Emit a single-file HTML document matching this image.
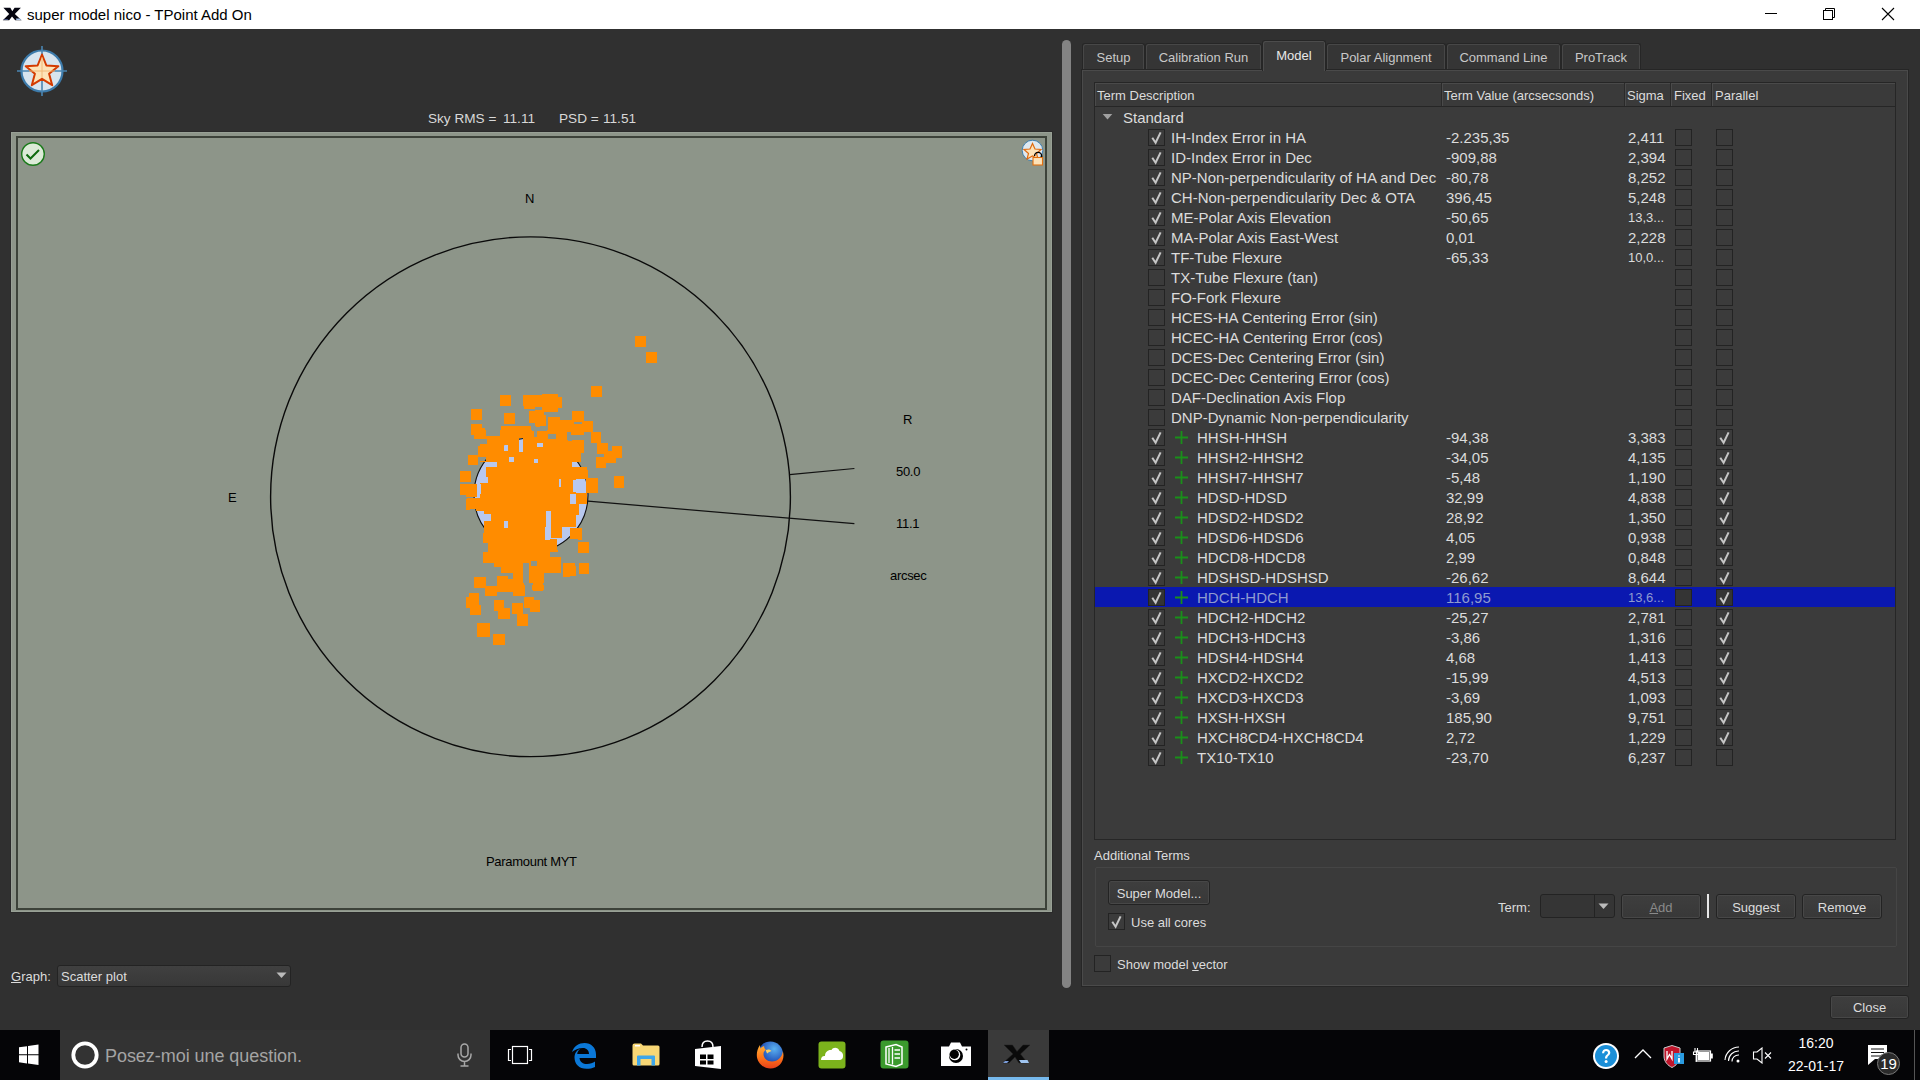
<!DOCTYPE html>
<html><head><meta charset="utf-8">
<style>
*{box-sizing:border-box;margin:0;padding:0}
html,body{width:1920px;height:1080px;overflow:hidden;background:#303030;font-family:"Liberation Sans",sans-serif;position:relative}
.a{position:absolute}
div{position:absolute}
.titlebar{left:0;top:0;width:1920px;height:29px;background:#fff}
.t15{font-size:15px;line-height:20px;color:#dcdcdc;white-space:nowrap}
.t13{font-size:13px;line-height:20px;color:#dcdcdc;white-space:nowrap}
.cb{width:17px;height:17px;border:1px solid #232323;background:#3b3b3b}
.cb svg{position:absolute;left:-1px;top:-1px}
.selbar{left:1095px;width:800px;height:20px;background:#0a18b0}
.tab{top:43px;height:27px;border:1px solid #262626;border-bottom:none;border-radius:3px 3px 0 0;background:#353535;color:#c8c8c8;font-size:13px;line-height:27px;text-align:center;box-shadow:inset 1px 1px 0 #474747,inset -1px 0 0 #474747}
.pl{font-size:13px;line-height:14px;color:#000;white-space:nowrap;letter-spacing:-0.3px}
.btn{border:1px solid #232323;border-radius:3px;background:linear-gradient(#3e3e3e,#383838);box-shadow:inset 0 0 0 1px #474747;color:#dcdcdc;font-size:13px;text-align:center}
</style></head><body>
<div class="titlebar">
  <svg class="a" style="left:0;top:0" width="24" height="24" viewBox="0 0 24 24"><path d="M3.4 7.8H10.3L12.3 11.3L14.6 7.8H20.9L14.8 14L21.6 20.3H15.2L12 16.6L9.2 20.3H2.8L9.2 14Z" fill="#050510"/><path d="M15.8 18.4H20L21.2 20H16.5Z" fill="#a9c4ec"/><path d="M4.6 19.2H8.4L7.6 20H3.8Z" fill="#5a6aa8"/></svg>
  <div style="left:27px;top:5px;font-size:15px;line-height:20px;color:#000">super model nico - TPoint Add On</div>
  <div style="left:1765px;top:13px;width:12px;height:1px;background:#000"></div>
  <svg class="a" style="left:1822px;top:7px" width="14" height="14" viewBox="0 0 14 14"><rect x="1.5" y="3.5" width="9" height="9" fill="none" stroke="#000"/><path d="M3.5 3.5V1.5H12.5V10.5H10.5" fill="none" stroke="#000"/></svg>
  <svg class="a" style="left:1881px;top:7px" width="14" height="14" viewBox="0 0 14 14"><path d="M1 1L13 13M13 1L1 13" stroke="#000" stroke-width="1.1"/></svg>
</div>

<!-- left panel -->
<svg class="a" style="left:16px;top:45px" width="52" height="52" viewBox="0 0 52 52">
  <circle cx="26" cy="26" r="20.5" fill="#d8e4ee" stroke="#3d7bab" stroke-width="2.2"/>
  <path d="M26 1V51M1 26H51" stroke="#4a85b2" stroke-width="1.6"/>
  <path d="M26 9.5 L30.4 20.5 L42.3 21.2 L33.1 28.7 L36.2 40.2 L26 33.8 L15.8 40.2 L18.9 28.7 L9.7 21.2 L21.6 20.5 Z" fill="#fde3b8" stroke="#d43a00" stroke-width="2" stroke-linejoin="round"/>
  <path d="M26 12V33M13 26H39" stroke="#f0b878" stroke-width="1"/>
</svg>
<div style="left:428px;top:110px;font-size:13.6px;line-height:18px;color:#d8d8d8;white-space:pre">Sky RMS =</div>
<div style="left:503px;top:110px;font-size:13.6px;line-height:18px;color:#d8d8d8;white-space:pre">11.11</div>
<div style="left:559px;top:110px;font-size:13.6px;line-height:18px;color:#d8d8d8;white-space:pre">PSD =</div>
<div style="left:603px;top:110px;font-size:13.6px;line-height:18px;color:#d8d8d8;white-space:pre">11.51</div>

<div style="left:10px;top:131px;width:1043px;height:782px;border:1px solid #2a2a2a;background:#8d9589"></div>
<div style="left:11px;top:132px;width:1041px;height:780px;border:1px solid #98a095"></div>
<div style="left:16px;top:136px;width:1031px;height:774px;border:2px solid #3c4239"></div>


<svg class="a" style="left:0;top:0" width="1060" height="1000" viewBox="0 0 1060 1000">
  <circle cx="530.5" cy="496.75" r="259.9" fill="none" stroke="#0a0a0a" stroke-width="1.4"/>
  <circle cx="531" cy="495" r="57" fill="#b8c8ee" stroke="#111" stroke-width="1.1"/>
  <path d="M789.5 474.6 L854.4 468.5" stroke="#111" stroke-width="1.2"/>
  <path d="M588 501.2 L854.4 523.7" stroke="#111" stroke-width="1.2"/>
  <g fill="#ff8c00"><path d="M635 336h11v11h-11zM646 352h11v11h-11zM591 386h11v8h-11zM542 394h16v1h-16zM591 394h11v1h-11zM500 395h11v2h-11zM523 395h35v2h-35zM591 395h11v2h-11zM500 397h11v9h-11zM523 397h39v9h-39zM524 406h38v1h-38zM524 407h11v1h-11zM542 407h20v1h-20zM524 408h11v1h-11zM542 408h16v1h-16zM471 409h11v1h-11zM542 409h16v1h-16zM471 410h11v1h-11zM535 410h23v1h-23zM471 411h11v1h-11zM529 411h29v1h-29zM572 411h12v1h-12zM471 412h11v1h-11zM529 412h15v1h-15zM572 412h12v1h-12zM471 413h11v2h-11zM504 413h11v2h-11zM529 413h15v2h-15zM572 413h12v2h-12zM471 415h11v2h-11zM504 415h11v2h-11zM529 415h17v2h-17zM572 415h12v2h-12zM471 417h11v3h-11zM504 417h11v3h-11zM529 417h17v3h-17zM548 417h12v3h-12zM572 417h12v3h-12zM504 420h11v1h-11zM529 420h17v1h-17zM548 420h36v1h-36zM504 421h11v1h-11zM529 421h17v1h-17zM548 421h45v1h-45zM504 422h11v1h-11zM529 422h17v1h-17zM548 422h26v1h-26zM582 422h11v1h-11zM504 423h11v1h-11zM535 423h11v1h-11zM548 423h26v1h-26zM582 423h11v1h-11zM471 424h11v2h-11zM535 424h11v2h-11zM548 424h45v2h-45zM471 426h11v1h-11zM501 426h30v1h-30zM536 426h4v1h-4zM548 426h45v1h-45zM471 427h11v1h-11zM501 427h30v1h-30zM548 427h45v1h-45zM471 428h14v2h-14zM501 428h30v2h-30zM548 428h45v2h-45zM471 430h15v1h-15zM500 430h32v1h-32zM547 430h46v1h-46zM471 431h15v1h-15zM500 431h34v1h-34zM537 431h56v1h-56zM471 432h15v2h-15zM500 432h34v2h-34zM537 432h30v2h-30zM571 432h13v2h-13zM591 432h10v2h-10zM471 434h15v1h-15zM500 434h34v1h-34zM537 434h11v1h-11zM556 434h11v1h-11zM571 434h13v1h-13zM591 434h10v1h-10zM474 435h12v1h-12zM500 435h34v1h-34zM537 435h11v1h-11zM556 435h11v1h-11zM591 435h10v1h-10zM474 436h60v1h-60zM537 436h11v1h-11zM556 436h11v1h-11zM591 436h10v1h-10zM474 437h74v1h-74zM556 437h11v1h-11zM591 437h10v1h-10zM474 438h45v1h-45zM523 438h25v1h-25zM556 438h11v1h-11zM591 438h10v1h-10zM487 439h32v1h-32zM523 439h44v1h-44zM591 439h10v1h-10zM487 440h32v1h-32zM523 440h45v1h-45zM572 440h12v1h-12zM591 440h10v1h-10zM487 441h32v2h-32zM523 441h61v2h-61zM591 441h10v2h-10zM487 443h32v1h-32zM523 443h14v1h-14zM543 443h41v1h-41zM597 443h11v1h-11zM480 444h39v1h-39zM523 444h14v1h-14zM543 444h41v1h-41zM597 444h11v1h-11zM480 445h24v1h-24zM508 445h11v1h-11zM523 445h14v1h-14zM543 445h41v1h-41zM597 445h11v1h-11zM478 446h26v1h-26zM508 446h11v1h-11zM523 446h14v1h-14zM543 446h41v1h-41zM597 446h11v1h-11zM612 446h10v1h-10zM478 447h26v4h-26zM508 447h11v4h-11zM523 447h61v4h-61zM597 447h11v4h-11zM612 447h10v4h-10zM478 451h41v1h-41zM523 451h61v1h-61zM597 451h25v1h-25zM478 452h106v1h-106zM597 452h25v1h-25zM478 453h103v1h-103zM597 453h25v1h-25zM478 454h103v1h-103zM604 454h18v1h-18zM468 455h113v2h-113zM604 455h18v2h-18zM468 457h10v1h-10zM486 457h23v1h-23zM514 457h67v1h-67zM596 457h26v1h-26zM468 458h10v1h-10zM486 458h23v1h-23zM514 458h67v1h-67zM596 458h20v1h-20zM468 459h10v2h-10zM486 459h23v2h-23zM514 459h20v2h-20zM538 459h43v2h-43zM596 459h20v2h-20zM468 461h10v1h-10zM480 461h29v1h-29zM514 461h20v1h-20zM538 461h43v1h-43zM596 461h20v1h-20zM468 462h10v1h-10zM497 462h37v1h-37zM538 462h34v1h-34zM596 462h20v1h-20zM468 463h10v2h-10zM497 463h75v2h-75zM596 463h10v2h-10zM497 465h75v2h-75zM596 465h10v2h-10zM486 467h101v1h-101zM596 467h10v1h-10zM486 468h101v2h-101zM486 470h102v1h-102zM460 471h11v5h-11zM486 471h102v5h-102zM460 476h11v1h-11zM486 476h102v1h-102zM614 476h10v1h-10zM460 477h11v1h-11zM488 477h100v1h-100zM614 477h10v1h-10zM460 478h11v1h-11zM488 478h110v1h-110zM614 478h10v1h-10zM460 479h11v1h-11zM488 479h71v1h-71zM561 479h15v1h-15zM586 479h12v1h-12zM614 479h10v1h-10zM460 480h11v2h-11zM488 480h71v2h-71zM561 480h12v2h-12zM586 480h12v2h-12zM614 480h10v2h-10zM488 482h71v1h-71zM561 482h12v1h-12zM586 482h12v1h-12zM614 482h10v1h-10zM480 483h79v1h-79zM561 483h12v1h-12zM586 483h12v1h-12zM614 483h10v1h-10zM460 484h17v3h-17zM481 484h78v3h-78zM561 484h12v3h-12zM586 484h12v3h-12zM614 484h10v3h-10zM460 487h17v1h-17zM481 487h92v1h-92zM586 487h12v1h-12zM614 487h10v1h-10zM460 488h17v4h-17zM481 488h92v4h-92zM586 488h12v4h-12zM460 492h17v1h-17zM481 492h95v1h-95zM586 492h12v1h-12zM460 493h17v1h-17zM481 493h106v1h-106zM460 494h17v1h-17zM480 494h90v1h-90zM576 494h11v1h-11zM466 495h11v2h-11zM480 495h90v2h-90zM576 495h11v2h-11zM480 497h90v1h-90zM576 497h11v1h-11zM467 498h103v1h-103zM576 498h11v1h-11zM466 499h104v5h-104zM576 499h11v5h-11zM466 504h113v5h-113zM466 509h4v1h-4zM476 509h103v1h-103zM476 510h103v1h-103zM484 511h62v3h-62zM551 511h28v3h-28zM491 514h55v1h-55zM551 514h28v1h-28zM491 515h55v6h-55zM551 515h25v6h-25zM484 521h20v6h-20zM508 521h38v6h-38zM551 521h25v6h-25zM484 527h20v1h-20zM508 527h37v1h-37zM551 527h11v1h-11zM484 528h61v5h-61zM551 528h11v5h-11zM570 528h12v5h-12zM483 533h62v5h-62zM551 533h11v5h-11zM570 533h12v5h-12zM483 538h62v1h-62zM570 538h12v1h-12zM483 539h62v1h-62zM550 539h7v1h-7zM578 539h4v1h-4zM483 540h74v2h-74zM483 542h74v1h-74zM578 542h11v1h-11zM488 543h69v7h-69zM578 543h11v7h-11zM488 550h70v2h-70zM578 550h11v2h-11zM483 552h67v1h-67zM578 552h11v1h-11zM483 553h67v4h-67zM483 557h78v4h-78zM483 561h48v2h-48zM537 561h24v2h-24zM494 563h29v3h-29zM529 563h2v3h-2zM537 563h24v3h-24zM563 563h12v3h-12zM579 563h10v3h-10zM494 566h29v1h-29zM529 566h32v1h-32zM563 566h13v1h-13zM579 566h10v1h-10zM501 567h22v6h-22zM529 567h32v6h-32zM563 567h13v6h-13zM579 567h10v6h-10zM513 573h10v1h-10zM529 573h15v1h-15zM563 573h13v1h-13zM579 573h10v1h-10zM513 574h10v2h-10zM529 574h15v2h-15zM563 574h13v2h-13zM497 576h11v1h-11zM513 576h10v1h-10zM529 576h15v1h-15zM563 576h7v1h-7zM474 577h12v2h-12zM497 577h11v2h-11zM513 577h10v2h-10zM529 577h15v2h-15zM474 579h12v4h-12zM497 579h26v4h-26zM529 579h15v4h-15zM474 583h12v2h-12zM497 583h27v2h-27zM533 583h10v2h-10zM474 585h12v1h-12zM497 585h28v1h-28zM532 585h12v1h-12zM474 586h51v2h-51zM532 586h12v2h-12zM485 588h40v2h-40zM532 588h12v2h-12zM485 590h40v1h-40zM533 590h10v1h-10zM485 591h40v1h-40zM485 592h12v1h-12zM513 592h12v1h-12zM469 593h10v3h-10zM485 593h12v3h-12zM513 593h12v3h-12zM469 596h10v1h-10zM466 597h13v3h-13zM524 597h10v3h-10zM466 600h13v3h-13zM494 600h10v3h-10zM524 600h16v3h-16zM466 603h13v2h-13zM494 603h10v2h-10zM512 603h11v2h-11zM524 603h16v2h-16zM466 605h15v3h-15zM494 605h10v3h-10zM512 605h11v3h-11zM524 605h16v3h-16zM470 608h11v3h-11zM494 608h16v3h-16zM512 608h11v3h-11zM530 608h10v3h-10zM470 611h11v1h-11zM498 611h12v1h-12zM512 611h11v1h-11zM530 611h10v1h-10zM470 612h11v2h-11zM498 612h12v2h-12zM512 612h11v2h-11zM470 614h11v1h-11zM498 614h12v1h-12zM517 614h11v1h-11zM498 615h12v4h-12zM517 615h11v4h-11zM517 619h11v4h-11zM477 623h13v3h-13zM517 623h11v3h-11zM477 626h13v8h-13zM477 634h13v3h-13zM493 634h12v3h-12zM493 637h12v8h-12z"/></g>
  <g fill="#b8c8ee"></g>
  <g fill="#ff8c00"></g>
</svg>
<div class="pl" style="left:525px;top:192px">N</div>
<div class="pl" style="left:228px;top:491px">E</div>
<div class="pl" style="left:903px;top:413px">R</div>
<div class="pl" style="left:896px;top:465px">50.0</div>
<div class="pl" style="left:896px;top:517px">11.1</div>
<div class="pl" style="left:890px;top:569px">arcsec</div>
<div class="pl" style="left:486px;top:855px">Paramount MYT</div>
<svg class="a" style="left:20px;top:141px" width="26" height="26" viewBox="0 0 26 26">
  <circle cx="13" cy="13" r="11.3" fill="#dcebd8" stroke="#1a7a1a" stroke-width="1.4"/>
  <path d="M6.5 13.5 L10.5 17.5 L19 9" fill="none" stroke="#0d6a0d" stroke-width="2"/>
</svg>
<svg class="a" style="left:1019px;top:139px" width="28" height="28" viewBox="0 0 28 28">
  <circle cx="13.5" cy="11.5" r="10.3" fill="#dfe8f0" stroke="#3f7fb0" stroke-width="1"/>
  <path d="M13.5 4.5 L16 10 L22 10.5 L17.5 14.5 L19 20 L13.5 17 L8 20 L9.5 14.5 L5 10.5 L11 10 Z" fill="#fde2b8" stroke="#e06a10" stroke-width="1.2"/>
  <path d="M15.5 17 A3.6 3.6 0 0 1 22.7 17 V19" fill="none" stroke="#000" stroke-width="1.4"/>
  <rect x="14" y="18.5" width="9.5" height="7.5" fill="#fde2b8" stroke="#e07010" stroke-width="1.1"/>
</svg>

<!-- right splitter -->
<div style="left:1062px;top:40px;width:9px;height:948px;border-radius:5px;background:#838383"></div>

<!-- tabs -->
<div class="tab" style="left:1082px;width:63px">Setup</div>
<div class="tab" style="left:1145px;width:117px">Calibration Run</div>
<div class="tab" style="left:1326px;width:120px">Polar Alignment</div>
<div class="tab" style="left:1446px;width:115px">Command Line</div>
<div class="tab" style="left:1561px;width:80px">ProTrack</div>
<div style="left:1081px;top:69px;width:828px;height:918px;border:1px solid #262626;background:#3a3a3a;box-shadow:inset 0 0 0 1px #4a4a4a"></div>
<div class="tab" style="left:1262px;top:40px;width:64px;height:31px;background:#3a3a3a;color:#e8e8e8;line-height:29px;border-bottom:none;z-index:2;box-shadow:inset 1px 1px 0 #4c4c4c,inset -1px 0 0 #4c4c4c">Model</div>

<!-- table -->
<div style="left:1094px;top:82px;width:802px;height:758px;border:1px solid #262626;background:#3b3b3b"></div>
<div style="left:1095px;top:83px;width:800px;height:24px;border-bottom:1px solid #262626;background:#3a3a3a;box-shadow:inset 1px 1px 0 #4a4a4a"></div>
<div style="left:1441px;top:83px;width:1px;height:23px;background:#2a2a2a;box-shadow:1px 0 0 #4a4a4a"></div>
<div style="left:1624px;top:83px;width:1px;height:23px;background:#2a2a2a;box-shadow:1px 0 0 #4a4a4a"></div>
<div style="left:1670px;top:83px;width:1px;height:23px;background:#2a2a2a;box-shadow:1px 0 0 #4a4a4a"></div>
<div style="left:1711px;top:83px;width:1px;height:23px;background:#2a2a2a;box-shadow:1px 0 0 #4a4a4a"></div>
<div class="t13" style="left:1097px;top:86px">Term Description</div>
<div class="t13" style="left:1444px;top:86px">Term Value (arcsecsonds)</div>
<div class="t13" style="left:1627px;top:86px">Sigma</div>
<div class="t13" style="left:1674px;top:86px">Fixed</div>
<div class="t13" style="left:1715px;top:86px">Parallel</div>
<svg class="a" style="left:1102px;top:114px" width="11" height="6" viewBox="0 0 11 6"><path d="M0.7 0H10.3L5.5 5.5Z" fill="#a0a0a0"/></svg>
<div class="t15" style="left:1123px;top:108px">Standard</div>
<div class="cb" style="left:1148px;top:129px;"><svg width="17" height="17" viewBox="0 0 17 17"><path d="M4.3 8.8 L7.6 13.8 L12.6 3.4" fill="none" stroke="#c6c6c6" stroke-width="2" stroke-linejoin="miter"/></svg></div>
<div class="t15" style="left:1171px;top:128px;">IH-Index Error in HA</div>
<div class="t15" style="left:1446px;top:128px;">-2.235,35</div>
<div class="t15" style="left:1628px;top:128px">2,411</div>
<div class="cb" style="left:1675px;top:129px;"></div>
<div class="cb" style="left:1716px;top:129px;"></div>
<div class="cb" style="left:1148px;top:149px;"><svg width="17" height="17" viewBox="0 0 17 17"><path d="M4.3 8.8 L7.6 13.8 L12.6 3.4" fill="none" stroke="#c6c6c6" stroke-width="2" stroke-linejoin="miter"/></svg></div>
<div class="t15" style="left:1171px;top:148px;">ID-Index Error in Dec</div>
<div class="t15" style="left:1446px;top:148px;">-909,88</div>
<div class="t15" style="left:1628px;top:148px">2,394</div>
<div class="cb" style="left:1675px;top:149px;"></div>
<div class="cb" style="left:1716px;top:149px;"></div>
<div class="cb" style="left:1148px;top:169px;"><svg width="17" height="17" viewBox="0 0 17 17"><path d="M4.3 8.8 L7.6 13.8 L12.6 3.4" fill="none" stroke="#c6c6c6" stroke-width="2" stroke-linejoin="miter"/></svg></div>
<div class="t15" style="left:1171px;top:168px;">NP-Non-perpendicularity of HA and Dec</div>
<div class="t15" style="left:1446px;top:168px;">-80,78</div>
<div class="t15" style="left:1628px;top:168px">8,252</div>
<div class="cb" style="left:1675px;top:169px;"></div>
<div class="cb" style="left:1716px;top:169px;"></div>
<div class="cb" style="left:1148px;top:189px;"><svg width="17" height="17" viewBox="0 0 17 17"><path d="M4.3 8.8 L7.6 13.8 L12.6 3.4" fill="none" stroke="#c6c6c6" stroke-width="2" stroke-linejoin="miter"/></svg></div>
<div class="t15" style="left:1171px;top:188px;">CH-Non-perpendicularity Dec &amp; OTA</div>
<div class="t15" style="left:1446px;top:188px;">396,45</div>
<div class="t15" style="left:1628px;top:188px">5,248</div>
<div class="cb" style="left:1675px;top:189px;"></div>
<div class="cb" style="left:1716px;top:189px;"></div>
<div class="cb" style="left:1148px;top:209px;"><svg width="17" height="17" viewBox="0 0 17 17"><path d="M4.3 8.8 L7.6 13.8 L12.6 3.4" fill="none" stroke="#c6c6c6" stroke-width="2" stroke-linejoin="miter"/></svg></div>
<div class="t15" style="left:1171px;top:208px;">ME-Polar Axis Elevation</div>
<div class="t15" style="left:1446px;top:208px;">-50,65</div>
<div class="t13" style="left:1628px;top:208px;">13,3...</div>
<div class="cb" style="left:1675px;top:209px;"></div>
<div class="cb" style="left:1716px;top:209px;"></div>
<div class="cb" style="left:1148px;top:229px;"><svg width="17" height="17" viewBox="0 0 17 17"><path d="M4.3 8.8 L7.6 13.8 L12.6 3.4" fill="none" stroke="#c6c6c6" stroke-width="2" stroke-linejoin="miter"/></svg></div>
<div class="t15" style="left:1171px;top:228px;">MA-Polar Axis East-West</div>
<div class="t15" style="left:1446px;top:228px;">0,01</div>
<div class="t15" style="left:1628px;top:228px">2,228</div>
<div class="cb" style="left:1675px;top:229px;"></div>
<div class="cb" style="left:1716px;top:229px;"></div>
<div class="cb" style="left:1148px;top:249px;"><svg width="17" height="17" viewBox="0 0 17 17"><path d="M4.3 8.8 L7.6 13.8 L12.6 3.4" fill="none" stroke="#c6c6c6" stroke-width="2" stroke-linejoin="miter"/></svg></div>
<div class="t15" style="left:1171px;top:248px;">TF-Tube Flexure</div>
<div class="t15" style="left:1446px;top:248px;">-65,33</div>
<div class="t13" style="left:1628px;top:248px;">10,0...</div>
<div class="cb" style="left:1675px;top:249px;"></div>
<div class="cb" style="left:1716px;top:249px;"></div>
<div class="cb" style="left:1148px;top:269px;"></div>
<div class="t15" style="left:1171px;top:268px;">TX-Tube Flexure (tan)</div>
<div class="cb" style="left:1675px;top:269px;"></div>
<div class="cb" style="left:1716px;top:269px;"></div>
<div class="cb" style="left:1148px;top:289px;"></div>
<div class="t15" style="left:1171px;top:288px;">FO-Fork Flexure</div>
<div class="cb" style="left:1675px;top:289px;"></div>
<div class="cb" style="left:1716px;top:289px;"></div>
<div class="cb" style="left:1148px;top:309px;"></div>
<div class="t15" style="left:1171px;top:308px;">HCES-HA Centering Error (sin)</div>
<div class="cb" style="left:1675px;top:309px;"></div>
<div class="cb" style="left:1716px;top:309px;"></div>
<div class="cb" style="left:1148px;top:329px;"></div>
<div class="t15" style="left:1171px;top:328px;">HCEC-HA Centering Error (cos)</div>
<div class="cb" style="left:1675px;top:329px;"></div>
<div class="cb" style="left:1716px;top:329px;"></div>
<div class="cb" style="left:1148px;top:349px;"></div>
<div class="t15" style="left:1171px;top:348px;">DCES-Dec Centering Error (sin)</div>
<div class="cb" style="left:1675px;top:349px;"></div>
<div class="cb" style="left:1716px;top:349px;"></div>
<div class="cb" style="left:1148px;top:369px;"></div>
<div class="t15" style="left:1171px;top:368px;">DCEC-Dec Centering Error (cos)</div>
<div class="cb" style="left:1675px;top:369px;"></div>
<div class="cb" style="left:1716px;top:369px;"></div>
<div class="cb" style="left:1148px;top:389px;"></div>
<div class="t15" style="left:1171px;top:388px;">DAF-Declination Axis Flop</div>
<div class="cb" style="left:1675px;top:389px;"></div>
<div class="cb" style="left:1716px;top:389px;"></div>
<div class="cb" style="left:1148px;top:409px;"></div>
<div class="t15" style="left:1171px;top:408px;">DNP-Dynamic Non-perpendicularity</div>
<div class="cb" style="left:1675px;top:409px;"></div>
<div class="cb" style="left:1716px;top:409px;"></div>
<div class="cb" style="left:1148px;top:429px;"><svg width="17" height="17" viewBox="0 0 17 17"><path d="M4.3 8.8 L7.6 13.8 L12.6 3.4" fill="none" stroke="#c6c6c6" stroke-width="2" stroke-linejoin="miter"/></svg></div>
<div class="plus" style="left:1174px;top:430px"><svg width="15" height="15" viewBox="0 0 15 15"><path d="M7.5 1V14M1 7.5H14" stroke="#1a8f1a" stroke-width="1.8"/></svg></div>
<div class="t15" style="left:1197px;top:428px;">HHSH-HHSH</div>
<div class="t15" style="left:1446px;top:428px;">-94,38</div>
<div class="t15" style="left:1628px;top:428px">3,383</div>
<div class="cb" style="left:1675px;top:429px;"></div>
<div class="cb" style="left:1716px;top:429px;"><svg width="17" height="17" viewBox="0 0 17 17"><path d="M4.3 8.8 L7.6 13.8 L12.6 3.4" fill="none" stroke="#c6c6c6" stroke-width="2" stroke-linejoin="miter"/></svg></div>
<div class="cb" style="left:1148px;top:449px;"><svg width="17" height="17" viewBox="0 0 17 17"><path d="M4.3 8.8 L7.6 13.8 L12.6 3.4" fill="none" stroke="#c6c6c6" stroke-width="2" stroke-linejoin="miter"/></svg></div>
<div class="plus" style="left:1174px;top:450px"><svg width="15" height="15" viewBox="0 0 15 15"><path d="M7.5 1V14M1 7.5H14" stroke="#1a8f1a" stroke-width="1.8"/></svg></div>
<div class="t15" style="left:1197px;top:448px;">HHSH2-HHSH2</div>
<div class="t15" style="left:1446px;top:448px;">-34,05</div>
<div class="t15" style="left:1628px;top:448px">4,135</div>
<div class="cb" style="left:1675px;top:449px;"></div>
<div class="cb" style="left:1716px;top:449px;"><svg width="17" height="17" viewBox="0 0 17 17"><path d="M4.3 8.8 L7.6 13.8 L12.6 3.4" fill="none" stroke="#c6c6c6" stroke-width="2" stroke-linejoin="miter"/></svg></div>
<div class="cb" style="left:1148px;top:469px;"><svg width="17" height="17" viewBox="0 0 17 17"><path d="M4.3 8.8 L7.6 13.8 L12.6 3.4" fill="none" stroke="#c6c6c6" stroke-width="2" stroke-linejoin="miter"/></svg></div>
<div class="plus" style="left:1174px;top:470px"><svg width="15" height="15" viewBox="0 0 15 15"><path d="M7.5 1V14M1 7.5H14" stroke="#1a8f1a" stroke-width="1.8"/></svg></div>
<div class="t15" style="left:1197px;top:468px;">HHSH7-HHSH7</div>
<div class="t15" style="left:1446px;top:468px;">-5,48</div>
<div class="t15" style="left:1628px;top:468px">1,190</div>
<div class="cb" style="left:1675px;top:469px;"></div>
<div class="cb" style="left:1716px;top:469px;"><svg width="17" height="17" viewBox="0 0 17 17"><path d="M4.3 8.8 L7.6 13.8 L12.6 3.4" fill="none" stroke="#c6c6c6" stroke-width="2" stroke-linejoin="miter"/></svg></div>
<div class="cb" style="left:1148px;top:489px;"><svg width="17" height="17" viewBox="0 0 17 17"><path d="M4.3 8.8 L7.6 13.8 L12.6 3.4" fill="none" stroke="#c6c6c6" stroke-width="2" stroke-linejoin="miter"/></svg></div>
<div class="plus" style="left:1174px;top:490px"><svg width="15" height="15" viewBox="0 0 15 15"><path d="M7.5 1V14M1 7.5H14" stroke="#1a8f1a" stroke-width="1.8"/></svg></div>
<div class="t15" style="left:1197px;top:488px;">HDSD-HDSD</div>
<div class="t15" style="left:1446px;top:488px;">32,99</div>
<div class="t15" style="left:1628px;top:488px">4,838</div>
<div class="cb" style="left:1675px;top:489px;"></div>
<div class="cb" style="left:1716px;top:489px;"><svg width="17" height="17" viewBox="0 0 17 17"><path d="M4.3 8.8 L7.6 13.8 L12.6 3.4" fill="none" stroke="#c6c6c6" stroke-width="2" stroke-linejoin="miter"/></svg></div>
<div class="cb" style="left:1148px;top:509px;"><svg width="17" height="17" viewBox="0 0 17 17"><path d="M4.3 8.8 L7.6 13.8 L12.6 3.4" fill="none" stroke="#c6c6c6" stroke-width="2" stroke-linejoin="miter"/></svg></div>
<div class="plus" style="left:1174px;top:510px"><svg width="15" height="15" viewBox="0 0 15 15"><path d="M7.5 1V14M1 7.5H14" stroke="#1a8f1a" stroke-width="1.8"/></svg></div>
<div class="t15" style="left:1197px;top:508px;">HDSD2-HDSD2</div>
<div class="t15" style="left:1446px;top:508px;">28,92</div>
<div class="t15" style="left:1628px;top:508px">1,350</div>
<div class="cb" style="left:1675px;top:509px;"></div>
<div class="cb" style="left:1716px;top:509px;"><svg width="17" height="17" viewBox="0 0 17 17"><path d="M4.3 8.8 L7.6 13.8 L12.6 3.4" fill="none" stroke="#c6c6c6" stroke-width="2" stroke-linejoin="miter"/></svg></div>
<div class="cb" style="left:1148px;top:529px;"><svg width="17" height="17" viewBox="0 0 17 17"><path d="M4.3 8.8 L7.6 13.8 L12.6 3.4" fill="none" stroke="#c6c6c6" stroke-width="2" stroke-linejoin="miter"/></svg></div>
<div class="plus" style="left:1174px;top:530px"><svg width="15" height="15" viewBox="0 0 15 15"><path d="M7.5 1V14M1 7.5H14" stroke="#1a8f1a" stroke-width="1.8"/></svg></div>
<div class="t15" style="left:1197px;top:528px;">HDSD6-HDSD6</div>
<div class="t15" style="left:1446px;top:528px;">4,05</div>
<div class="t15" style="left:1628px;top:528px">0,938</div>
<div class="cb" style="left:1675px;top:529px;"></div>
<div class="cb" style="left:1716px;top:529px;"><svg width="17" height="17" viewBox="0 0 17 17"><path d="M4.3 8.8 L7.6 13.8 L12.6 3.4" fill="none" stroke="#c6c6c6" stroke-width="2" stroke-linejoin="miter"/></svg></div>
<div class="cb" style="left:1148px;top:549px;"><svg width="17" height="17" viewBox="0 0 17 17"><path d="M4.3 8.8 L7.6 13.8 L12.6 3.4" fill="none" stroke="#c6c6c6" stroke-width="2" stroke-linejoin="miter"/></svg></div>
<div class="plus" style="left:1174px;top:550px"><svg width="15" height="15" viewBox="0 0 15 15"><path d="M7.5 1V14M1 7.5H14" stroke="#1a8f1a" stroke-width="1.8"/></svg></div>
<div class="t15" style="left:1197px;top:548px;">HDCD8-HDCD8</div>
<div class="t15" style="left:1446px;top:548px;">2,99</div>
<div class="t15" style="left:1628px;top:548px">0,848</div>
<div class="cb" style="left:1675px;top:549px;"></div>
<div class="cb" style="left:1716px;top:549px;"><svg width="17" height="17" viewBox="0 0 17 17"><path d="M4.3 8.8 L7.6 13.8 L12.6 3.4" fill="none" stroke="#c6c6c6" stroke-width="2" stroke-linejoin="miter"/></svg></div>
<div class="cb" style="left:1148px;top:569px;"><svg width="17" height="17" viewBox="0 0 17 17"><path d="M4.3 8.8 L7.6 13.8 L12.6 3.4" fill="none" stroke="#c6c6c6" stroke-width="2" stroke-linejoin="miter"/></svg></div>
<div class="plus" style="left:1174px;top:570px"><svg width="15" height="15" viewBox="0 0 15 15"><path d="M7.5 1V14M1 7.5H14" stroke="#1a8f1a" stroke-width="1.8"/></svg></div>
<div class="t15" style="left:1197px;top:568px;">HDSHSD-HDSHSD</div>
<div class="t15" style="left:1446px;top:568px;">-26,62</div>
<div class="t15" style="left:1628px;top:568px">8,644</div>
<div class="cb" style="left:1675px;top:569px;"></div>
<div class="cb" style="left:1716px;top:569px;"><svg width="17" height="17" viewBox="0 0 17 17"><path d="M4.3 8.8 L7.6 13.8 L12.6 3.4" fill="none" stroke="#c6c6c6" stroke-width="2" stroke-linejoin="miter"/></svg></div>
<div class="selbar" style="top:587px"></div>
<div class="cb" style="left:1148px;top:589px;background:#343434;"><svg width="17" height="17" viewBox="0 0 17 17"><path d="M4.3 8.8 L7.6 13.8 L12.6 3.4" fill="none" stroke="#c6c6c6" stroke-width="2" stroke-linejoin="miter"/></svg></div>
<div class="plus" style="left:1174px;top:590px"><svg width="15" height="15" viewBox="0 0 15 15"><path d="M7.5 1V14M1 7.5H14" stroke="#1a8f1a" stroke-width="1.8"/></svg></div>
<div class="t15" style="left:1197px;top:588px;color:#8f9bd0;">HDCH-HDCH</div>
<div class="t15" style="left:1446px;top:588px;color:#8f9bd0;">116,95</div>
<div class="t13" style="left:1628px;top:588px;color:#8f9bd0;">13,6...</div>
<div class="cb" style="left:1675px;top:589px;background:#343434;"></div>
<div class="cb" style="left:1716px;top:589px;background:#343434;"><svg width="17" height="17" viewBox="0 0 17 17"><path d="M4.3 8.8 L7.6 13.8 L12.6 3.4" fill="none" stroke="#c6c6c6" stroke-width="2" stroke-linejoin="miter"/></svg></div>
<div class="cb" style="left:1148px;top:609px;"><svg width="17" height="17" viewBox="0 0 17 17"><path d="M4.3 8.8 L7.6 13.8 L12.6 3.4" fill="none" stroke="#c6c6c6" stroke-width="2" stroke-linejoin="miter"/></svg></div>
<div class="plus" style="left:1174px;top:610px"><svg width="15" height="15" viewBox="0 0 15 15"><path d="M7.5 1V14M1 7.5H14" stroke="#1a8f1a" stroke-width="1.8"/></svg></div>
<div class="t15" style="left:1197px;top:608px;">HDCH2-HDCH2</div>
<div class="t15" style="left:1446px;top:608px;">-25,27</div>
<div class="t15" style="left:1628px;top:608px">2,781</div>
<div class="cb" style="left:1675px;top:609px;"></div>
<div class="cb" style="left:1716px;top:609px;"><svg width="17" height="17" viewBox="0 0 17 17"><path d="M4.3 8.8 L7.6 13.8 L12.6 3.4" fill="none" stroke="#c6c6c6" stroke-width="2" stroke-linejoin="miter"/></svg></div>
<div class="cb" style="left:1148px;top:629px;"><svg width="17" height="17" viewBox="0 0 17 17"><path d="M4.3 8.8 L7.6 13.8 L12.6 3.4" fill="none" stroke="#c6c6c6" stroke-width="2" stroke-linejoin="miter"/></svg></div>
<div class="plus" style="left:1174px;top:630px"><svg width="15" height="15" viewBox="0 0 15 15"><path d="M7.5 1V14M1 7.5H14" stroke="#1a8f1a" stroke-width="1.8"/></svg></div>
<div class="t15" style="left:1197px;top:628px;">HDCH3-HDCH3</div>
<div class="t15" style="left:1446px;top:628px;">-3,86</div>
<div class="t15" style="left:1628px;top:628px">1,316</div>
<div class="cb" style="left:1675px;top:629px;"></div>
<div class="cb" style="left:1716px;top:629px;"><svg width="17" height="17" viewBox="0 0 17 17"><path d="M4.3 8.8 L7.6 13.8 L12.6 3.4" fill="none" stroke="#c6c6c6" stroke-width="2" stroke-linejoin="miter"/></svg></div>
<div class="cb" style="left:1148px;top:649px;"><svg width="17" height="17" viewBox="0 0 17 17"><path d="M4.3 8.8 L7.6 13.8 L12.6 3.4" fill="none" stroke="#c6c6c6" stroke-width="2" stroke-linejoin="miter"/></svg></div>
<div class="plus" style="left:1174px;top:650px"><svg width="15" height="15" viewBox="0 0 15 15"><path d="M7.5 1V14M1 7.5H14" stroke="#1a8f1a" stroke-width="1.8"/></svg></div>
<div class="t15" style="left:1197px;top:648px;">HDSH4-HDSH4</div>
<div class="t15" style="left:1446px;top:648px;">4,68</div>
<div class="t15" style="left:1628px;top:648px">1,413</div>
<div class="cb" style="left:1675px;top:649px;"></div>
<div class="cb" style="left:1716px;top:649px;"><svg width="17" height="17" viewBox="0 0 17 17"><path d="M4.3 8.8 L7.6 13.8 L12.6 3.4" fill="none" stroke="#c6c6c6" stroke-width="2" stroke-linejoin="miter"/></svg></div>
<div class="cb" style="left:1148px;top:669px;"><svg width="17" height="17" viewBox="0 0 17 17"><path d="M4.3 8.8 L7.6 13.8 L12.6 3.4" fill="none" stroke="#c6c6c6" stroke-width="2" stroke-linejoin="miter"/></svg></div>
<div class="plus" style="left:1174px;top:670px"><svg width="15" height="15" viewBox="0 0 15 15"><path d="M7.5 1V14M1 7.5H14" stroke="#1a8f1a" stroke-width="1.8"/></svg></div>
<div class="t15" style="left:1197px;top:668px;">HXCD2-HXCD2</div>
<div class="t15" style="left:1446px;top:668px;">-15,99</div>
<div class="t15" style="left:1628px;top:668px">4,513</div>
<div class="cb" style="left:1675px;top:669px;"></div>
<div class="cb" style="left:1716px;top:669px;"><svg width="17" height="17" viewBox="0 0 17 17"><path d="M4.3 8.8 L7.6 13.8 L12.6 3.4" fill="none" stroke="#c6c6c6" stroke-width="2" stroke-linejoin="miter"/></svg></div>
<div class="cb" style="left:1148px;top:689px;"><svg width="17" height="17" viewBox="0 0 17 17"><path d="M4.3 8.8 L7.6 13.8 L12.6 3.4" fill="none" stroke="#c6c6c6" stroke-width="2" stroke-linejoin="miter"/></svg></div>
<div class="plus" style="left:1174px;top:690px"><svg width="15" height="15" viewBox="0 0 15 15"><path d="M7.5 1V14M1 7.5H14" stroke="#1a8f1a" stroke-width="1.8"/></svg></div>
<div class="t15" style="left:1197px;top:688px;">HXCD3-HXCD3</div>
<div class="t15" style="left:1446px;top:688px;">-3,69</div>
<div class="t15" style="left:1628px;top:688px">1,093</div>
<div class="cb" style="left:1675px;top:689px;"></div>
<div class="cb" style="left:1716px;top:689px;"><svg width="17" height="17" viewBox="0 0 17 17"><path d="M4.3 8.8 L7.6 13.8 L12.6 3.4" fill="none" stroke="#c6c6c6" stroke-width="2" stroke-linejoin="miter"/></svg></div>
<div class="cb" style="left:1148px;top:709px;"><svg width="17" height="17" viewBox="0 0 17 17"><path d="M4.3 8.8 L7.6 13.8 L12.6 3.4" fill="none" stroke="#c6c6c6" stroke-width="2" stroke-linejoin="miter"/></svg></div>
<div class="plus" style="left:1174px;top:710px"><svg width="15" height="15" viewBox="0 0 15 15"><path d="M7.5 1V14M1 7.5H14" stroke="#1a8f1a" stroke-width="1.8"/></svg></div>
<div class="t15" style="left:1197px;top:708px;">HXSH-HXSH</div>
<div class="t15" style="left:1446px;top:708px;">185,90</div>
<div class="t15" style="left:1628px;top:708px">9,751</div>
<div class="cb" style="left:1675px;top:709px;"></div>
<div class="cb" style="left:1716px;top:709px;"><svg width="17" height="17" viewBox="0 0 17 17"><path d="M4.3 8.8 L7.6 13.8 L12.6 3.4" fill="none" stroke="#c6c6c6" stroke-width="2" stroke-linejoin="miter"/></svg></div>
<div class="cb" style="left:1148px;top:729px;"><svg width="17" height="17" viewBox="0 0 17 17"><path d="M4.3 8.8 L7.6 13.8 L12.6 3.4" fill="none" stroke="#c6c6c6" stroke-width="2" stroke-linejoin="miter"/></svg></div>
<div class="plus" style="left:1174px;top:730px"><svg width="15" height="15" viewBox="0 0 15 15"><path d="M7.5 1V14M1 7.5H14" stroke="#1a8f1a" stroke-width="1.8"/></svg></div>
<div class="t15" style="left:1197px;top:728px;">HXCH8CD4-HXCH8CD4</div>
<div class="t15" style="left:1446px;top:728px;">2,72</div>
<div class="t15" style="left:1628px;top:728px">1,229</div>
<div class="cb" style="left:1675px;top:729px;"></div>
<div class="cb" style="left:1716px;top:729px;"><svg width="17" height="17" viewBox="0 0 17 17"><path d="M4.3 8.8 L7.6 13.8 L12.6 3.4" fill="none" stroke="#c6c6c6" stroke-width="2" stroke-linejoin="miter"/></svg></div>
<div class="cb" style="left:1148px;top:749px;"><svg width="17" height="17" viewBox="0 0 17 17"><path d="M4.3 8.8 L7.6 13.8 L12.6 3.4" fill="none" stroke="#c6c6c6" stroke-width="2" stroke-linejoin="miter"/></svg></div>
<div class="plus" style="left:1174px;top:750px"><svg width="15" height="15" viewBox="0 0 15 15"><path d="M7.5 1V14M1 7.5H14" stroke="#1a8f1a" stroke-width="1.8"/></svg></div>
<div class="t15" style="left:1197px;top:748px;">TX10-TX10</div>
<div class="t15" style="left:1446px;top:748px;">-23,70</div>
<div class="t15" style="left:1628px;top:748px">6,237</div>
<div class="cb" style="left:1675px;top:749px;"></div>
<div class="cb" style="left:1716px;top:749px;"></div>

<!-- additional terms -->
<div class="t13" style="left:1094px;top:846px">Additional Terms</div>
<div style="left:1095px;top:867px;width:802px;height:80px;border:1px solid #454545;border-radius:2px"></div>
<div class="btn" style="left:1108px;top:880px;width:102px;height:25px;line-height:25px">Super Model...</div>
<div class="cb" style="left:1108px;top:913px;"><svg width="17" height="17" viewBox="0 0 17 17"><path d="M4.3 8.8 L7.6 13.8 L12.6 3.4" fill="none" stroke="#c6c6c6" stroke-width="2" stroke-linejoin="miter"/></svg></div>
<div class="t13" style="left:1131px;top:913px">Use all cores</div>
<div class="t13" style="left:1498px;top:898px">Term:</div>
<div style="left:1540px;top:894px;width:75px;height:24px;border:1px solid #232323;border-radius:3px;background:#353535"></div>
<div style="left:1594px;top:895px;width:1px;height:22px;background:#232323"></div>
<svg class="a" style="left:1598px;top:903px" width="11" height="7" viewBox="0 0 11 7"><path d="M0.5 0.5H10.5L5.5 6Z" fill="#bbb"/></svg>
<div class="btn" style="left:1621px;top:894px;width:80px;height:25px;line-height:25px;color:#8a8a8a"><u>A</u>dd</div>
<div style="left:1707px;top:894px;width:2px;height:24px;background:#e8e8e8"></div>
<div class="btn" style="left:1716px;top:894px;width:80px;height:25px;line-height:25px">Su<u>g</u>gest</div>
<div class="btn" style="left:1802px;top:894px;width:80px;height:25px;line-height:25px">Remo<u>v</u>e</div>
<div class="cb" style="left:1094px;top:955px;"></div>
<div class="t13" style="left:1117px;top:955px">Show model <u>v</u>ector</div>
<div class="btn" style="left:1830px;top:995px;width:79px;height:24px;line-height:24px">Close</div>

<!-- graph combo -->
<div class="t13" style="left:11px;top:967px"><u>G</u>raph:</div>
<div style="left:57px;top:965px;width:234px;height:22px;border:1px solid #232323;border-radius:3px;background:linear-gradient(#404040,#383838)"></div>
<div class="t13" style="left:61px;top:967px">Scatter plot</div>
<svg class="a" style="left:276px;top:972px" width="11" height="7" viewBox="0 0 11 7"><path d="M0.5 0.5H10.5L5.5 6Z" fill="#bbb"/></svg>

<!-- taskbar -->
<div style="left:0;top:1030px;width:1920px;height:50px;background:radial-gradient(ellipse 180px 40px at 540px 1090px,#0d1a2a,transparent),radial-gradient(ellipse 120px 30px at 1255px 1085px,#0c1624,transparent),#050507"></div>
<div style="left:60px;top:1030px;width:430px;height:50px;background:#333333"></div>
<svg class="a" style="left:17px;top:1043px" width="24" height="24" viewBox="0 0 24 24"><path d="M2 4.3L10 3.2V11.3H2ZM11 3L21.5 1.6V11.3H11ZM2 12.3H10V20.4L2 19.3ZM11 12.3H21.5V22L11 20.6Z" fill="#fff"/></svg>
<svg class="a" style="left:70px;top:1040px" width="30" height="30" viewBox="0 0 30 30"><circle cx="15" cy="15" r="11.7" fill="none" stroke="#fff" stroke-width="3.8"/></svg>
<div style="left:105px;top:1045px;font-size:18px;line-height:22px;color:#a4a4a4;white-space:nowrap;letter-spacing:-0.05px">Posez-moi une question.</div>
<svg class="a" style="left:455px;top:1043px" width="20" height="25" viewBox="0 0 20 25"><rect x="6" y="1" width="7" height="13" rx="3.5" fill="none" stroke="#a8a8a8" stroke-width="1.5"/><path d="M3 10.5V12a6.5 6.5 0 0 0 13 0V10.5M9.5 18.5V23M5.5 23H13.5" fill="none" stroke="#a8a8a8" stroke-width="1.5"/></svg>
<svg class="a" style="left:507px;top:1045px" width="26" height="20" viewBox="0 0 26 20"><rect x="5.5" y="1.5" width="15" height="17" fill="none" stroke="#fff" stroke-width="1.2"/><path d="M4 4.5H1.5V15.5H4M22 4.5H24.5V15.5H22" fill="none" stroke="#fff" stroke-width="1.2"/></svg>
<svg class="a" style="left:571px;top:1042px" width="26" height="27" viewBox="0 0 26 27"><path d="M1 10C3 4 8 1 13.5 1C20 1 25 5.5 25 12.5V16H8.5C9 20 12 22 16 22C19 22 22 21 24 19.5V25C21.5 26.3 18.5 26.8 15.5 26.8C8 26.8 3.5 22 3.5 15.5C3.5 11 6 8 9.5 6.5C7 8.5 6.3 10.5 6.2 12H18C18 8.5 15.5 6 12 6C7.5 6 3.5 8 1 10Z" fill="#0b78d7"/></svg>
<svg class="a" style="left:632px;top:1043px" width="28" height="23" viewBox="0 0 28 23"><path d="M0.5 2.5Q0.5 0.5 2.5 0.5H9L11 2.5H26Q27.5 2.5 27.5 4V21Q27.5 22.5 26 22.5H2Q0.5 22.5 0.5 21Z" fill="#f8d775"/><rect x="3" y="2" width="5" height="1.5" fill="#fff"/><path d="M5 22.5V13.5Q5 12.5 6 12.5H22Q23 12.5 23 13.5V22.5H19.5V16H8.5V22.5Z" fill="#3ea6ea"/></svg>
<svg class="a" style="left:694px;top:1040px" width="28" height="30" viewBox="0 0 28 30"><path d="M8 7C8 2 11 1 13.5 1C16 1 19 2 19 7" fill="none" stroke="#fff" stroke-width="1.5"/><path d="M1 9L27 6V29L1 26Z" fill="#fff"/><path d="M6 14.5H12V19H6ZM13.5 14.5H19.5V19H13.5ZM6 20.5H12V24.5H6ZM13.5 20.5H19.5V24.5H13.5Z" fill="#000"/></svg>
<svg class="a" style="left:755px;top:1040px" width="30" height="30" viewBox="0 0 30 30"><defs><radialGradient id="ffg" cx="0.65" cy="0.3" r="0.75"><stop offset="0" stop-color="#5ab0f0"/><stop offset="0.6" stop-color="#2a5fc0"/><stop offset="1" stop-color="#1b2f8a"/></radialGradient><linearGradient id="ffo" x1="0" y1="0" x2="0" y2="1"><stop offset="0" stop-color="#ffb13a"/><stop offset="0.5" stop-color="#ff7a1a"/><stop offset="1" stop-color="#e8401a"/></linearGradient></defs><circle cx="15.5" cy="14" r="12.5" fill="url(#ffg)"/><path d="M5 5C3 8 1.8 11 1.8 15C1.8 22.5 8 28.5 15.5 28.5C23 28.5 28.5 22.5 28.5 15.5C28.5 14 28.2 12.5 27.8 11.5C27 17 23 21.5 17 21.5C12 21.5 8.5 18 8.5 14C8.5 12 9.5 10.5 11 10C9.5 9 9 7.5 9.2 6C7.5 6.5 6.2 7.5 5.5 8.5C5.2 7.3 5 6 5 5Z" fill="url(#ffo)"/><path d="M11 10C13 9 15.5 9.5 16.5 11C15 11.5 13.5 12 12.5 13.5C11.5 12.5 11 11.5 11 10Z" fill="#ffd060"/></svg>
<svg class="a" style="left:818px;top:1041px" width="28" height="28" viewBox="0 0 28 28"><rect x="0.5" y="0.5" width="27" height="27" rx="3" fill="#7cb31c"/><path d="M3 19C3 16 5 14.5 7 15C7 11 10 8.5 13.5 9C15 6 20 6 21.5 10C24 10.5 25.5 13 25 15.5C25 17.5 23.5 19 21.5 19Z" fill="#fff"/></svg>
<svg class="a" style="left:880px;top:1040px" width="29" height="29" viewBox="0 0 29 29"><rect x="0.5" y="0.5" width="28" height="28" rx="3" fill="#3b9a2d"/><path d="M6 7L16 4.5L22 7V24L16 26.5L6 24Z" fill="none" stroke="#fff" stroke-width="1.5"/><path d="M9 8V23M12.5 7V24.5" stroke="#fff" stroke-width="1.3"/><path d="M14.5 10H20M14.5 14H20M14.5 18H20" stroke="#fff" stroke-width="1.5"/></svg>
<svg class="a" style="left:940px;top:1041px" width="32" height="26" viewBox="0 0 32 26"><path d="M1 5.5H9L11 1.5H20L22 5.5H31V25H1Z" fill="#fff"/><circle cx="16" cy="15" r="7" fill="#000"/><circle cx="14.8" cy="13.8" r="5.5" fill="#fff"/><circle cx="14.3" cy="13.3" r="4.6" fill="#000"/><circle cx="26.5" cy="8.5" r="1" fill="#000"/></svg>
<div style="left:988px;top:1030px;width:61px;height:50px;background:#3a3a3a"></div>
<div style="left:988px;top:1077px;width:61px;height:3px;background:#76b9ed"></div>
<svg class="a" style="left:1003px;top:1044px" width="28" height="20" viewBox="0 0 28 20"><path d="M1 1H9.5L14 7.5L20 1H27L17.5 10L24.5 19H16L12 13L6 19H0L10 10Z" fill="#0a0a0a" stroke="#222" stroke-width="0.5"/><path d="M16 16H24.5L26 19H18Z" fill="#9fc4ef"/><path d="M2 17H6L4 19H0Z" fill="#7a9cd8"/></svg>

<!-- tray -->
<svg class="a" style="left:1592px;top:1042px" width="28" height="28" viewBox="0 0 28 28"><circle cx="14" cy="14" r="13" fill="#fff"/><circle cx="14" cy="14" r="11" fill="#1b8fd8"/><path d="M10 11.2C10 8.5 12 7 14.2 7C16.6 7 18.3 8.6 18.3 10.6C18.3 13.5 15.2 13.8 15.2 16.5H13C13 13 16 12.7 16 10.8C16 9.8 15.2 9 14.1 9C13 9 12.2 9.9 12.2 11.2Z" fill="#fff"/><circle cx="14.1" cy="19.6" r="1.5" fill="#fff"/></svg>
<svg class="a" style="left:1634px;top:1048px" width="18" height="12" viewBox="0 0 18 12"><path d="M1 10L9 2L17 10" fill="none" stroke="#fff" stroke-width="1.3"/></svg>
<svg class="a" style="left:1663px;top:1045px" width="22" height="24" viewBox="0 0 22 24"><path d="M1 3L9 0.5L17 3V11C17 17 13 20.5 9 22.5C5 20.5 1 17 1 11Z" fill="#c0162c" stroke="#ccc" stroke-width="1"/><path d="M4 6V14L6.5 9.5L9 14V6" fill="none" stroke="#fff" stroke-width="1.3"/><rect x="11" y="8" width="10" height="11" fill="#2a9be0"/><path d="M16 10.5V11.5M16 13V17.5" stroke="#fff" stroke-width="1.8"/></svg>
<svg class="a" style="left:1692px;top:1047px" width="22" height="16" viewBox="0 0 22 16"><path d="M3 1V5M5.5 1V5M1.5 5H7V7.5H1.5ZM4.2 7.5V15" stroke="#fff" stroke-width="1.1" fill="none"/><rect x="4.5" y="4" width="14" height="10" fill="none" stroke="#fff" stroke-width="1.2"/><rect x="5.5" y="5" width="12" height="8" fill="#fff"/><rect x="19" y="6.5" width="1.8" height="5" fill="#fff"/></svg>
<svg class="a" style="left:1724px;top:1046px" width="20" height="18" viewBox="0 0 20 18"><path d="M1 14A14 14 0 0 1 15 1M4.5 15A10 10 0 0 1 15 5M8 15.5A6.5 6.5 0 0 1 15 9" fill="none" stroke="#fff" stroke-width="1.1"/><circle cx="14" cy="15" r="1.5" fill="#fff"/></svg>
<svg class="a" style="left:1752px;top:1047px" width="22" height="17" viewBox="0 0 22 17"><path d="M1.5 5H5L10 1V16L5 12H1.5Z" fill="none" stroke="#fff" stroke-width="1.1"/><path d="M13 5.5L19 11.5M19 5.5L13 11.5" stroke="#fff" stroke-width="1.1"/></svg>
<div style="left:1796px;top:1034px;width:40px;font-size:14px;line-height:18px;color:#fff;text-align:center">16:20</div>
<div style="left:1781px;top:1056px;width:70px;font-size:14px;line-height:20px;color:#fff;text-align:center">22-01-17</div>
<svg class="a" style="left:1866px;top:1044px" width="40" height="34" viewBox="0 0 40 34"><path d="M2 1H21V15H9L2 21Z" fill="#fff"/><path d="M5 5H18M5 8.5H18M5 12H15" stroke="#111" stroke-width="1.2"/><circle cx="22.5" cy="19.5" r="11" fill="#2b2b2b" stroke="#777" stroke-width="1"/><text x="22.5" y="25.3" font-family="Liberation Sans" font-size="15" fill="#fff" text-anchor="middle">19</text></svg>
<div style="left:1914px;top:1030px;width:1px;height:50px;background:#555"></div>
</body></html>
